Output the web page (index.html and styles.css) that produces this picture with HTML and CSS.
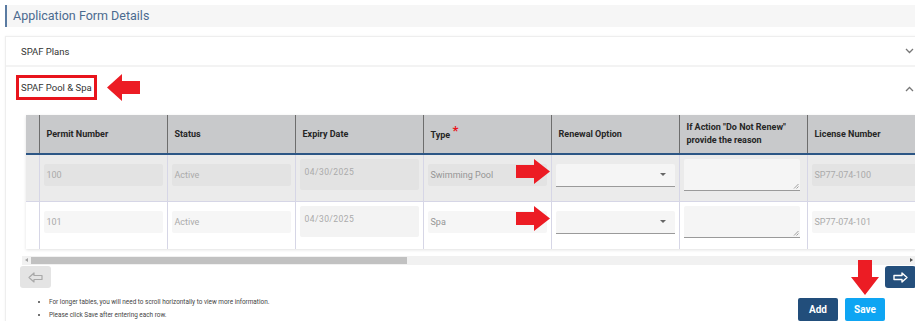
FILE: index.html
```html
<!DOCTYPE html>
<html>
<head>
<meta charset="utf-8">
<link rel="stylesheet" href="styles.css">
</head>
<body>
<div class="page">
  <div class="title">Application Form Details</div>
  <div class="panel">
    <div class="acc-head">
      <span class="acc-label">SPAF Plans</span>
      <svg class="chev" width="9" height="6" viewBox="0 0 9 6"><path d="M1 1 L4.5 4.5 L8 1" fill="none" stroke="#777" stroke-width="1.3"/></svg>
    </div>
    <div class="acc-head open">
      <span class="hl-wrap">
        <span class="hl">SPAF Pool &amp; Spa</span>
        <svg class="red-left" width="33" height="27" viewBox="0 0 33 27"><polygon points="0,13.5 15,0 15,7 33,7 33,20 15,20 15,27" fill="#ec1c24"/></svg>
      </span>
      <svg class="chev" width="9" height="6" viewBox="0 0 9 6"><path d="M1 5 L4.5 1.5 L8 5" fill="none" stroke="#777" stroke-width="1.3"/></svg>
    </div>
    <div class="acc-body">
      <div class="table-wrap">
        <table class="grid">
          <colgroup>
            <col class="c-sel"><col class="c"><col class="c"><col class="c"><col class="c"><col class="c"><col class="c"><col class="c">
          </colgroup>
          <thead>
            <tr>
              <th></th>
              <th>Permit Number</th>
              <th>Status</th>
              <th>Expiry Date</th>
              <th>Type <span class="req">*</span></th>
              <th>Renewal Option</th>
              <th>If Action "Do Not Renew"<br>provide the reason</th>
              <th>License Number</th>
            </tr>
          </thead>
          <tbody>
            <tr class="r1">
              <td></td>
              <td><div class="inp">100</div></td>
              <td><div class="inp">Active</div></td>
              <td><div class="inp date">04/30/2025</div></td>
              <td class="has-arrow"><div class="inp type">Swimming Pool</div><svg class="red-right" width="34" height="25" viewBox="0 0 34 25"><polygon points="34,12.5 18,0 18,6 0,6 0,19 18,19 18,25" fill="#ec1c24"/></svg></td>
              <td><div class="select"><span class="caret"></span></div></td>
              <td><div class="textarea"><svg class="grip" width="6" height="6" viewBox="0 0 6 6"><path d="M5.5 1 L1 5.5 M5.5 3.5 L3.5 5.5" stroke="#888" stroke-width="0.8"/></svg></div></td>
              <td><div class="inp">SP77-074-100</div></td>
            </tr>
            <tr class="r2">
              <td></td>
              <td><div class="inp">101</div></td>
              <td><div class="inp">Active</div></td>
              <td><div class="inp date">04/30/2025</div></td>
              <td class="has-arrow"><div class="inp type">Spa</div><svg class="red-right" width="34" height="25" viewBox="0 0 34 25"><polygon points="34,12.5 18,0 18,6 0,6 0,19 18,19 18,25" fill="#ec1c24"/></svg></td>
              <td><div class="select"><span class="caret"></span></div></td>
              <td><div class="textarea"><svg class="grip" width="6" height="6" viewBox="0 0 6 6"><path d="M5.5 1 L1 5.5 M5.5 3.5 L3.5 5.5" stroke="#888" stroke-width="0.8"/></svg></div></td>
              <td><div class="inp">SP77-074-101</div></td>
            </tr>
          </tbody>
        </table>
      </div>
      <div class="scrollbar">
        <span class="sb-arrow left"></span>
        <span class="sb-thumb"></span>
        <span class="sb-arrow right"></span>
      </div>
      <div class="nav-row">
        <button class="nav prev"><svg width="15" height="11" viewBox="0 0 15 11"><polygon points="1,5.5 6,1 6,3.5 14,3.5 14,7.5 6,7.5 6,10" fill="none" stroke="#a9a9a9" stroke-width="1.2" stroke-linejoin="round"/></svg></button>
        <button class="nav next"><svg width="15" height="11" viewBox="0 0 15 11"><polygon points="14,5.5 9,1 9,3.5 1,3.5 1,7.5 9,7.5 9,10" fill="none" stroke="#fff" stroke-width="1.4" stroke-linejoin="round"/></svg></button>
      </div>
      <div class="foot">
        <ul class="notes">
          <li>For longer tables, you will need to scroll horizontally to view more information.</li>
          <li>Please click Save after entering each row.</li>
        </ul>
        <div class="actions">
          <button class="btn add">Add</button>
          <button class="btn save">Save</button>
          <svg class="red-down" width="28" height="35" viewBox="0 0 28 35"><polygon points="14,35 0,17 7,17 7,0 21,0 21,17 28,17" fill="#ec1c24"/></svg>
        </div>
      </div>
    </div>
  </div>
</div>
</body>
</html>
```
FILE: styles.css
```css
html, body {
  margin: 0;
  padding: 0;
  background: #fff;
  overflow: hidden;
}
body {
  width: 915px;
  height: 321px;
  font-family: Roboto, "Liberation Sans", sans-serif;
}
.page {
  width: 920px;
  padding: 5px 0 0 5px;
}
.title {
  height: 22px;
  line-height: 22px;
  background: #f6f6f6;
  border-left: 2px solid #5a7ba2;
  padding-left: 6px;
  font-family: Roboto, "Liberation Sans", sans-serif;
  font-size: 12.5px;
  color: #4a6a8f;
}
.panel {
  margin-top: 9px;
  border: 1px solid #eeeeee;
  border-right: none;
  border-bottom: none;
  box-shadow: 0 0 2px rgba(0,0,0,0.06);
}
.acc-head {
  display: flex;
  align-items: center;
  justify-content: space-between;
  height: 28px;
  padding: 0 11px 0 15px;
  border-bottom: 2px solid #f3f3f3;
  font-family: Roboto, "Liberation Sans", sans-serif;
  font-size: 9.5px;
  color: #333;
}
.acc-head.open {
  height: auto;
  align-items: flex-start;
  padding: 7px 11px 0 10px;
  border-bottom: none;
}
.acc-head.open .chev {
  margin-top: 12px;
}
.hl-wrap {
  display: flex;
  align-items: center;
}
.hl {
  display: inline-block;
  border: 3px solid #e8141c;
  padding: 3px 2px;
  line-height: 13px;
}
.red-left {
  margin-left: 10px;
}
.acc-body {
  padding: 14px 9px 0 16px;
}
.table-wrap {
  margin-left: 4px;
  overflow: hidden;
  box-shadow: 0 1px 3px rgba(0,0,0,0.12);
}
.grid {
  border-collapse: collapse;
  table-layout: fixed;
  width: 909px;
}
.c-sel { width: 13px; }
.c { width: 128px; }
.grid th {
  background: #c8c9cb;
  height: 38px;
  padding: 0 7px;
  text-align: left;
  font-size: 9px;
  font-weight: 700;
  color: #262626;
  line-height: 13px;
  border-left: 1px solid #6d6d6d;
  border-bottom: 2px solid #2c5685;
  white-space: nowrap;
}
.grid th:first-child {
  border-left: none;
}
.req {
  color: #e8141c;
  font-size: 13px;
  position: relative;
  top: -3px;
}
.grid td {
  padding: 4px 4px 0;
  vertical-align: top;
  border-left: 1px solid #d6d6e6;
  border-bottom: 1px solid #d6d6e6;
  position: relative;
}
.grid td:first-child {
  border-left: none;
}
.r1 td { background: #ebebeb; height: 42px; }
.r2 td { background: #fff; height: 43px; border-bottom: none; }
.inp {
  margin-top: 5px;
  height: 22px;
  line-height: 22px;
  padding: 0 3px;
  border-radius: 2px;
  font-size: 9px;
  color: #aaaaaa;
  white-space: nowrap;
  overflow: hidden;
}
.r1 .inp { background: #e3e3e3; }
.r2 .inp { background: #f6f6f6; }
.inp.type { color: #959595; }
.inp.date {
  margin-top: 0;
  height: 31px;
  line-height: 13px;
  padding: 7px 5px 0;
  box-sizing: border-box;
  font-size: 8.5px;
  letter-spacing: 0.45px;
}
.r2 .inp.date { background: #f3f3f3; }
.red-right {
  position: absolute;
  right: 1px;
  top: 4px;
}
.select {
  margin-top: 5px;
  height: 22px;
  background: #f5f5f5;
  border-radius: 2px 2px 0 0;
  border-bottom: 1px solid #9a9a9a;
  position: relative;
}
.caret {
  position: absolute;
  right: 9px;
  top: 9px;
  width: 0;
  height: 0;
  border-left: 3px solid transparent;
  border-right: 3px solid transparent;
  border-top: 3px solid #666;
}
.textarea {
  height: 31px;
  background: #f5f5f5;
  border-radius: 2px 2px 0 0;
  border-bottom: 1px solid #9a9a9a;
  position: relative;
  margin-right: 3px;
}
.grip {
  position: absolute;
  right: 1px;
  bottom: 1px;
}
.scrollbar {
  margin-top: 7px;
  height: 9px;
  background: #f1f1f1;
  position: relative;
}
.sb-thumb {
  position: absolute;
  left: 9px;
  width: 376px;
  top: 1px;
  height: 7px;
  background: #c1c1c1;
}
.sb-arrow {
  position: absolute;
  top: 2px;
  width: 0;
  height: 0;
  border-top: 2.5px solid transparent;
  border-bottom: 2.5px solid transparent;
}
.sb-arrow.left { left: 3px; border-right: 3px solid #a3a3a3; }
.sb-arrow.right { right: 3px; border-left: 3px solid #505050; }
.nav-row {
  display: flex;
  justify-content: space-between;
  margin: 1px 0 0 -2px;
}
.nav {
  width: 31px;
  height: 22px;
  border: none;
  border-radius: 3px;
  padding: 0;
  display: flex;
  align-items: center;
  justify-content: center;
}
.nav.prev { background: #e4e4e4; }
.nav.next { background: #244f7c; }
.foot {
  display: flex;
  justify-content: space-between;
  margin-top: 8px;
}
.notes {
  margin: 0;
  padding: 0 0 0 27px;
  font-size: 6.4px;
  line-height: 13px;
  color: #444;
}
.actions {
  display: flex;
  gap: 7px;
  margin: 2px 31px 0 0;
  position: relative;
}
.btn {
  height: 23px;
  width: 40px;
  border: none;
  border-radius: 2px;
  padding: 0;
  font-family: Roboto, sans-serif;
  font-size: 10px;
  font-weight: 700;
  color: #fff;
}
.btn.add { background: #224e7b; }
.btn.save { background: #0ea5f3; }
.red-down {
  position: absolute;
  right: 6px;
  top: -38px;
}
```
